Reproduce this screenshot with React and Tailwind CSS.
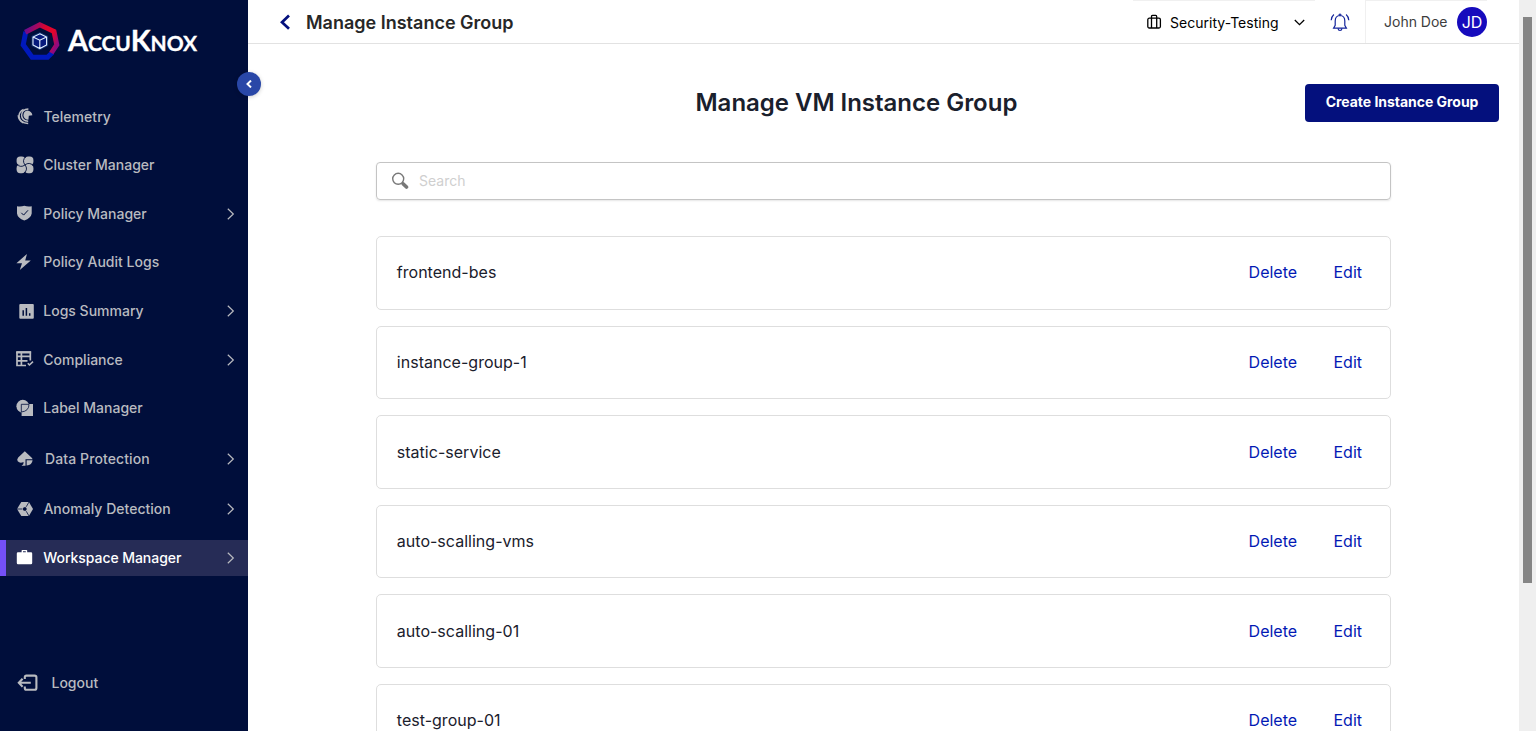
import React from "react";

const Svg = ({ children, className = "w-[18px] h-[18px]", viewBox = "0 0 18 18" }) => (
  <svg className={`${className} block shrink-0`} viewBox={viewBox} fill="none">{children}</svg>
);

const icons = {
  telemetry: (
    <Svg>
      <path d="M7.4 7.4Q7.6 3 11.4 2.4Q15.6 2.8 16.4 7.2L12.8 7.8 12.4 11.8Q8 11.4 7.4 7.4Z" fill="currentColor" />
      <path d="M12.4 .9Q5.7 1.2 5.6 7.3Q5.8 13 12.2 13.2" stroke="currentColor" strokeWidth="1.5" />
      <path d="M7.6 1.5Q3 3.6 3.1 8.2Q3.6 14.7 12.2 15.5M2.2 7.2Q2.4 12.2 7.2 15" stroke="currentColor" strokeWidth="1.4" />
    </Svg>
  ),
  cluster: (
    <Svg>
      <g fill="currentColor">
        <rect x=".6" y=".5" width="8.8" height="8.6" rx="3.6" />
        <rect x="8.6" y=".5" width="8.8" height="8.6" rx="3.6" />
        <rect x="8.6" y="8.6" width="8.8" height="8.6" rx="3.6" />
        <rect x=".6" y="8.6" width="8.8" height="8.6" rx="3.6" />
        <rect x="5" y="4.8" width="8" height="8.2" />
      </g>
      <g stroke="#000e3b" strokeWidth=".9">
        <path d="M9.8 .6Q5.6 4.6 9 8.9" />
        <path d="M17.4 9.6Q13.2 5.6 9 8.9" />
        <path d="M8.2 17.2Q12.4 13.2 9 8.9" />
        <path d="M.6 8.2Q4.8 12.2 9 8.9" />
      </g>
    </Svg>
  ),
  policy: (
    <Svg>
      <path d="M1 1.2Q5 1.8 8.3 .8Q11.6 1.8 15.7 1.2V8.6Q15 13.3 8.3 15.6Q1.6 13.3 1 8.6Z" fill="currentColor" />
      <path d="M5.3 7.8 7.6 10.1 12 5.3" stroke="#000e3b" strokeWidth="1" />
    </Svg>
  ),
  bolt: (
    <Svg><path d="M11 .9 .4 10.2H6L3.8 17 14.8 7.4H9.2Z" fill="currentColor" /></Svg>
  ),
  logs: (
    <Svg>
      <rect x="3.3" y="2" width="14.5" height="14.8" rx="1" fill="currentColor" />
      <path d="M7.2 8.2v5.5M10.4 6v7.7M13.7 11.3v2.4" stroke="#000e3b" strokeWidth="1.5" />
    </Svg>
  ),
  compliance: (
    <Svg>
      <path d="M1 1H14.3V9.5M1 .5V14.5H10M1 5.4H14.3M1 9.9H11.5M5.4 1V14.3" stroke="currentColor" strokeWidth="1.7" />
      <path d="M.2 1.4H15.1" stroke="currentColor" strokeWidth="2.2" />
      <path d="M11.8 12.3 13.4 14 17 10.7" stroke="currentColor" strokeWidth="1.6" />
    </Svg>
  ),
  label: (
    <Svg>
      <path d="M12.6 5H17V17H5.6V12.6" fill="currentColor" />
      <circle cx="6.8" cy="7.2" r="6.4" fill="currentColor" />
      <path d="M5.3 13V5.3H13Q13 12.2 5.3 13Z" stroke="#000e3b" strokeWidth=".8" />
    </Svg>
  ),
  data: (
    <Svg>
      <path d="M8.8 1.2 2.2 7.6Q.5 9.6 1.7 11.2Q4 13.7 7.6 11.9L7.3 14.3 5.5 15.8H9.5V9.3H16.6Q16.5 8.2 15.5 7.4Z" fill="currentColor" />
      <path d="M10.6 10.3H16.6Q16.1 15.2 10.6 15.4Z" fill="currentColor" />
    </Svg>
  ),
  anomaly: (
    <Svg>
      <path d="M5.3 2H12.9L17 9 12.9 16H5.3L1 9Z" fill="currentColor" />
      <path d="M1 9H6.3M10.2 6.8 13 2M10.2 11.2 13 16" stroke="#000e3b" strokeWidth=".8" />
      <path d="M6.6 9 7.8 7.2H9.8L10.8 9 9.8 10.8H7.8Z" fill="#000e3b" />
    </Svg>
  ),
  briefcase: (
    <Svg>
      <path fillRule="evenodd" d="M5.6 3.3V1.6Q5.6.9 6.3.9H10.5Q11.2.9 11.2 1.6V3.3H15Q16.2 3.3 16.2 4.5V14Q16.2 15.2 15 15.2H2Q.8 15.2.8 14V4.5Q.8 3.3 2 3.3ZM7 3.3H9.8V2.3H7Z" fill="currentColor" />
    </Svg>
  ),
};

const nav = [
  { icon: icons.telemetry, label: "Telemetry", text: "ml-[9.4px] tracking-[0.05px]" },
  { icon: icons.cluster, label: "Cluster Manager", row: "mt-3" },
  { icon: icons.policy, label: "Policy Manager", row: "mt-[13px]", more: true },
  { icon: icons.bolt, label: "Policy Audit Logs", row: "mt-3", text: "ml-[9.3px] tracking-[0.02px]" },
  { icon: icons.logs, label: "Logs Summary", row: "mt-[13px]", more: true },
  { icon: icons.compliance, label: "Compliance", row: "mt-[13px]", more: true },
  { icon: icons.label, label: "Label Manager", row: "mt-3" },
  { icon: icons.data, label: "Data Protection", row: "mt-[15px]", more: true, text: "ml-[11px] tracking-[0.1px]" },
  { icon: icons.anomaly, label: "Anomaly Detection", row: "mt-[14px]", more: true, text: "ml-[9.4px] tracking-[0.02px]" },
  { icon: icons.briefcase, label: "Workspace Manager", row: "mt-[13px]", more: true, active: true, text: "ml-[9.3px] tracking-[-0.06px]" },
];

const groups = [
  "frontend-bes",
  "instance-group-1",
  "static-service",
  "auto-scalling-vms",
  "auto-scalling-01",
  "test-group-01",
];

function Logo() {
  return (
    <div className="flex h-[42px] items-center pl-[19.5px]">
      <svg className="mb-px h-10 w-10 shrink-0" viewBox="0 0 40 40" fill="none">
        <defs>
          <linearGradient id="ringTop" x1="5" y1="10" x2="36" y2="26" gradientUnits="userSpaceOnUse">
            <stop offset="0" stopColor="#6a0c91" />
            <stop offset=".45" stopColor="#d8052f" />
            <stop offset=".75" stopColor="#e3042b" />
            <stop offset="1" stopColor="#8c0a80" />
          </linearGradient>
        </defs>
        <path d="M5.8 10.8 3.2 23.8 12.1 36.2H27.5L32.4 31.5" stroke="#0019bd" strokeWidth="5" />
        <path d="M5.2 11.2 19.8 3.8 34 10.4 36.8 23.8 31.4 32" stroke="url(#ringTop)" strokeWidth="5" />
        <path d="M19.8 12.8 26.6 16V24L19.8 27.6 13 24V16Z" stroke="#1d4a9b" strokeWidth="3" opacity=".55" />
        <path d="M19.8 12.8 26.6 16V24L19.8 27.6 13 24V16Z" fill="#061a7c" />
        <path d="M19.8 12.8 26.6 16V24L19.8 27.6 13 24V16ZM13 16 19.8 19.2 26.6 16M19.8 19.2V27.6" stroke="#e4f0ff" strokeWidth="1.1" />
      </svg>
      <div className="ml-[8.5px] whitespace-nowrap pt-px font-['Lato'] text-[21px] font-bold leading-[42px] tracking-[-0.1px] text-white [-webkit-text-stroke:0.3px_white]">
        <span className="text-[29px]">A</span>CCU<span className="text-[29px]">K</span>NOX
      </div>
    </div>
  );
}

function NavItem({ icon, label, row = "", text = "ml-[9.3px]", more, active }) {
  return (
    <a className={`flex h-9 items-center pr-[13px] ${row} ${active ? "border-l-[6px] border-[#7450f7] bg-[#262c56] pl-[10px] text-white" : "pl-4 text-[#b9bbc0]"}`}>
      {icon}
      <span className={`${text} whitespace-nowrap text-[14px] font-medium leading-5`}>{label}</span>
      {more && (
        <Svg className="ml-auto h-3 w-[9px] text-[#b9bbc0]" viewBox="0 0 9 12">
          <path d="M1.8 .8 7.3 6 1.8 11.2" stroke="currentColor" strokeWidth="1.2" />
        </Svg>
      )}
    </a>
  );
}

function Sidebar() {
  return (
    <aside className="relative flex h-full w-[248px] shrink-0 flex-col bg-[#000e3b] pt-5">
      <Logo />
      <nav className="mt-[37px]">
        {nav.map((n) => <NavItem key={n.label} {...n} />)}
      </nav>
      <a className="mt-[89px] flex h-9 items-center pl-[17px] text-[#b9bbc0]">
        <Svg className="h-[18px] w-[22px]" viewBox="0 0 22 18">
          <path d="M7.8 5V3.2Q7.8 1.6 9.4 1.6H17.6Q19.4 1.6 19.4 3.2V14Q19.4 15.8 17.6 15.8H9.4Q7.8 15.8 7.8 14V12.6" stroke="currentColor" strokeWidth="2.1" />
          <path d="M13.8 8.8H2M5.6 4.8 1.8 8.8 5.6 12.8" stroke="currentColor" strokeWidth="2.1" />
        </Svg>
        <span className="ml-[12.5px] text-[14px] font-medium leading-5">Logout</span>
      </a>
      <button className="absolute left-[237px] top-[72px] z-10 flex h-6 w-6 items-center justify-center rounded-full bg-[#2947a7] pr-px shadow-[0_1px_4px_rgba(0,0,0,0.2)]">
        <Svg className="h-2 w-[6px]" viewBox="0 0 6 8"><path d="M5 .6 1.5 4 5 7.4" stroke="#fff" strokeWidth="2" /></Svg>
      </button>
    </aside>
  );
}

function Header() {
  return (
    <header className="flex h-11 shrink-0 border-b border-[#e2e2e2]">
      <Svg className="ml-8 mt-[14px] h-4 w-[11px]" viewBox="0 0 11 16">
        <path d="M9 1.5 2 8.2 9 14.8" stroke="#04107d" strokeWidth="2.7" />
      </Svg>
      <h1 className="ml-[15px] whitespace-nowrap text-[18px] font-semibold leading-[45px] text-[#272727]">Manage Instance Group</h1>
      <div className="ml-auto flex h-[43px] w-[182px] items-center border-t border-[#f0f0f0] pl-[13px] text-black">
        <Svg className="h-4 w-4" viewBox="0 0 16 16">
          <rect x="1.8" y="4.2" width="12.6" height="9.8" rx="1.5" stroke="currentColor" strokeWidth="1.3" />
          <path d="M5.5 14V2.7Q5.5 1.4 6.5 1.4H9.7Q10.7 1.4 10.7 2.7V14" stroke="currentColor" strokeWidth="1.3" />
        </Svg>
        <span className="ml-2 mt-[2px] whitespace-nowrap text-[14px] leading-5 tracking-[0.03px]">Security-Testing</span>
        <Svg className="ml-auto mr-[10px] h-[7px] w-[11px]" viewBox="0 0 11 7"><path d="M.8 1 5.5 5.7 10.2 1" stroke="currentColor" strokeWidth="1.3" /></Svg>
      </div>
      <div className="flex w-[50px] items-center pl-[15px] pt-px text-[#14259b]">
        <Svg className="h-[19px] w-5" viewBox="0 0 20 19">
          <path d="M3.6 15.2H16.4L14.8 12.4V8Q14.8 2.7 10 2.5Q5.2 2.7 5.2 8V12.4Z" stroke="currentColor" strokeWidth="1.2" />
          <path d="M9 2.3Q9 1 10 1T11 2.3M8 15.4Q8.3 17.5 10 17.5T12 15.4M3.9 1.5Q1.5 3.5 1.2 7.3M16.1 1.5Q18.5 3.5 18.8 7.3" stroke="currentColor" strokeWidth="1.2" />
        </Svg>
      </div>
      <div className="mr-8 flex h-[43px] w-[122px] items-center justify-between border-l border-t border-[#f0f0f0] pl-[18px]">
        <span className="whitespace-nowrap text-[14px] leading-5 text-[#3d3d3d]">John Doe</span>
        <span className="flex h-[30px] w-[30px] items-center justify-center rounded-full bg-[#160bbd] text-[16px] text-white">JD</span>
      </div>
    </header>
  );
}

function GroupCard({ name }) {
  return (
    <li className="flex h-[73.6px] shrink-0 items-center rounded-[5px] border border-[#dedede] pb-[0.8px] pl-[19.8px] pr-[28px] text-[16px] leading-6">
      <span className="tracking-[0.02px] text-[#1a202c]">{name}</span>
      <a className="ml-auto text-[#0219b4]">Delete</a>
      <a className="ml-[36.4px] text-[#0219b4]">Edit</a>
    </li>
  );
}

export default function App() {
  return (
    <div className="flex h-[731px] w-[1536px] overflow-hidden bg-white font-['Inter','Liberation_Sans',sans-serif]">
      <Sidebar />
      <main className="flex h-full w-[1271px] shrink-0 flex-col overflow-hidden">
        <Header />
        <div className="mt-10 flex h-[38px] shrink-0 items-center justify-between pl-[447.5px] pr-5">
          <h2 className="whitespace-nowrap text-[24px] font-semibold leading-9 tracking-[-0.02px] text-[#1a202c]">Manage VM Instance Group</h2>
          <button className="h-[38px] w-[194px] whitespace-nowrap rounded-[4px] bg-[#04107d] pb-[3px] text-[14px] font-bold tracking-[-0.03px] text-white">Create Instance Group</button>
        </div>
        <div className="mx-32 mt-10 flex h-[38px] shrink-0 items-center rounded-[4px] border border-[#c4c4c4] pl-[14px] shadow-[0_1px_2px_rgba(0,0,0,0.1)]">
          <Svg className="h-[18px] w-[18px]">
            <circle cx="7.2" cy="6.8" r="5.5" stroke="#787878" strokeWidth="1.4" />
            <path d="M11.2 10.8 12.5 12.1" stroke="#787878" strokeWidth="1.6" />
            <path d="M12.3 11.9 15.5 15.1" stroke="#787878" strokeWidth="3.6" strokeLinecap="round" />
          </Svg>
          <span className="ml-[10px] text-[14px] leading-5 text-[#cfcfcf]">Search</span>
        </div>
        <ul className="mx-32 mt-9 flex flex-col gap-4">
          {groups.map((g) => <GroupCard key={g} name={g} />)}
        </ul>
      </main>
      <div className="flex h-full w-[17px] shrink-0 justify-center bg-[#efefef] pt-[17px]">
        <div className="h-[566px] w-[9px] bg-[#858585]" />
      </div>
    </div>
  );
}
